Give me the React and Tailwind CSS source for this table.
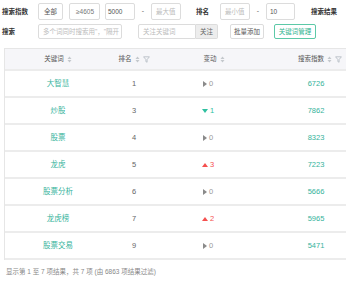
import React from "react";

const font = { fontFamily: '"Liberation Sans", "Noto Sans CJK SC", sans-serif' };

function SortIcon() {
  return (
    <svg width="5" height="7" viewBox="0 0 5 7" className="ml-[3px]">
      <path d="M2.5 0.5 L4.5 3 L0.5 3 Z" fill="#c4c8cc" />
      <path d="M2.5 6.5 L4.5 4 L0.5 4 Z" fill="#c4c8cc" />
    </svg>
  );
}
function FilterIcon() {
  return (
    <svg width="7" height="7" viewBox="0 0 7 7" className="ml-[3px]">
      <path d="M0.6 0.8 H6.4 L4.1 3.6 V6.2 L2.9 5.6 V3.6 Z" fill="none" stroke="#b8bec6" strokeWidth="0.9" strokeLinejoin="round" />
    </svg>
  );
}

function Change({ dir, n }) {
  if (dir === "up")
    return (
      <span className="flex items-center text-[#f5504f]">
        <svg width="6" height="4" viewBox="0 0 6 4" className="mr-[2px]"><path d="M3 0 L6 4 L0 4 Z" fill="#f5504f" /></svg>
        {n}
      </span>
    );
  if (dir === "down")
    return (
      <span className="flex items-center text-[#2fc0a0]">
        <svg width="6" height="4" viewBox="0 0 6 4" className="mr-[2px]"><path d="M0 0 L6 0 L3 4 Z" fill="#2fc0a0" /></svg>
        {n}
      </span>
    );
  return (
    <span className="flex items-center text-[#999]">
      <svg width="4" height="6" viewBox="0 0 4 6" className="mr-[2px]"><path d="M0 0 L4 3 L0 6 Z" fill="#8a8a8a" /></svg>
      {n}
    </span>
  );
}

const rows = [
  ["大智慧", 1, "none", 0, 6726],
  ["炒股", 3, "down", 1, 7862],
  ["股票", 4, "none", 0, 8323],
  ["龙虎", 5, "up", 3, 7223],
  ["股票分析", 6, "none", 0, 5666],
  ["龙虎榜", 7, "up", 2, 5965],
  ["股票交易", 9, "none", 0, 5471],
];

const box = "h-full border border-[#dcdcdc] rounded-[2px] flex items-center text-[6.5px] bg-white";

export default function App() {
  return (
    <div className="w-[346px] h-[283px] overflow-hidden bg-white text-[#333]" style={font}>
      {/* row 1 */}
      <div className="flex items-center h-[17px] mt-[3px] pl-[2px]">
        <div className="w-[36px] text-[6.5px] font-bold text-[#333]">搜索指数</div>
        <div className={`${box} w-[25px] justify-center text-[#555]`}>全部</div>
        <div className={`${box} w-[31px] ml-[6px] pl-[6px] text-[#777]`}>≥4605</div>
        <div className={`${box} w-[30px] ml-[5px] pl-[2px] text-[#555]`}>5000</div>
        <div className="w-[16px] text-center text-[7px] text-[#666]">-</div>
        <div className={`${box} w-[30px] pl-[4px] text-[#bbb]`}>最大值</div>
        <div className="w-[24px] ml-[15px] text-[6.5px] font-bold">排名</div>
        <div className={`${box} w-[30px] pl-[4px] text-[#bbb]`}>最小值</div>
        <div className="w-[16px] text-center text-[7px] text-[#666]">-</div>
        <div className={`${box} w-[29px] pl-[3px] text-[#555]`}>10</div>
        <div className="ml-[16px] text-[6.5px] font-bold whitespace-nowrap">搜索结果</div>
      </div>
      {/* row 2 */}
      <div className="flex items-center h-[15px] mt-[4px] pl-[2px]">
        <div className="w-[36px] text-[6.5px] font-bold">搜索</div>
        <div className={`${box} w-[84px] pl-[4px] text-[#bbb] whitespace-nowrap`}>多个词同时搜索用"，"隔开</div>
        <div className="flex h-full ml-[16px]">
          <div className="h-full w-[58px] border border-[#dcdcdc] rounded-l-[2px] flex items-center pl-[4px] text-[6.5px] text-[#bbb]">关注关键词</div>
          <div className="h-full w-[22px] border border-l-0 border-[#dcdcdc] rounded-r-[2px] bg-[#ededed] flex items-center justify-center text-[6.5px] text-[#666]">关注</div>
        </div>
        <div className={`${box} w-[34px] ml-[12px] justify-center text-[#555]`}>批量添加</div>
        <div className="h-full w-[42px] ml-[10px] border border-[#5cc9a7] rounded-[2px] flex items-center justify-center text-[6.5px] text-[#2fb48f]">关键词管理</div>
      </div>

      {/* table */}
      <div className="ml-[4px] mt-[9px] w-[380px] border-l border-t border-[#e6e6e6]">
        <div className="flex h-[22px] bg-[#f6f6f9] border-b-2 border-[#ececec] text-[6.5px] text-[#555]">
          <div className="w-[106px] flex items-center justify-center">关键词<SortIcon /></div>
          <div className="w-[46px] flex items-center justify-center">排名<SortIcon /><FilterIcon /></div>
          <div className="w-[104px] flex items-center justify-center pl-[10px]">变动<SortIcon /></div>
          <div className="w-[110px] flex items-center justify-center pl-[8px]">搜索指数<SortIcon /><FilterIcon /></div>
        </div>
        {rows.map(([k, r, d, c, v]) => (
          <div key={k} className="flex h-[27px] border-b-2 border-[#ececec] text-[7.5px]">
            <div className="w-[106px] flex items-center justify-center text-[#35b39b]">{k}</div>
            <div className="w-[46px] flex items-center justify-center text-[#666]">{r}</div>
            <div className="w-[104px] flex items-center justify-center pr-[2px]"><Change dir={d} n={c} /></div>
            <div className="w-[110px] flex items-center justify-center text-[#35b39b]">{v}</div>
          </div>
        ))}
      </div>
      <div className="mt-[7px] pl-[6px] text-[6.5px] text-[#888] whitespace-nowrap">
        显示第 1 至 7 项结果，共 7 项 (由 6863 项结果过滤)
      </div>
    </div>
  );
}
